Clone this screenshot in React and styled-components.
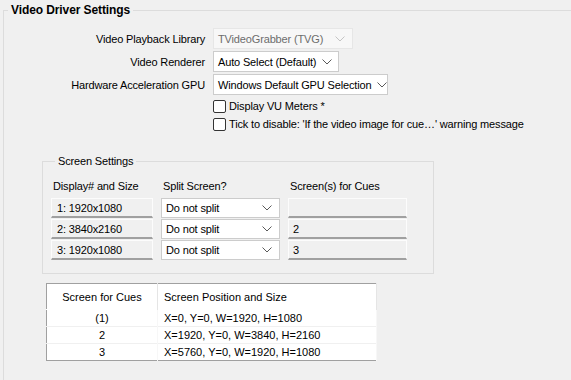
import React from "react";
import styled, { createGlobalStyle } from "styled-components";

const GlobalStyle = createGlobalStyle`
  html, body {
    margin: 0;
    padding: 0;
    background: #f0f0f0;
  }
  body {
    font-family: "Liberation Sans", Arial, sans-serif;
    font-size: 11px;
    letter-spacing: -0.15px;
    color: #000;
    overflow: hidden;
  }
`;

// 화면 데이터
const displays = [
  { name: "1: 1920x1080", split: "Do not split", cue: "" },
  { name: "2: 3840x2160", split: "Do not split", cue: "2" },
  { name: "3: 1920x1080", split: "Do not split", cue: "3" },
];

const cueScreens = [
  { screen: "(1)", pos: "X=0, Y=0, W=1920, H=1080" },
  { screen: "2", pos: "X=1920, Y=0, W=3840, H=2160" },
  { screen: "3", pos: "X=5760, Y=0, W=1920, H=1080" },
];

const Page = styled.div`
  height: 380px;
  width: 571px;
  overflow: hidden;
  padding-left: 3px;
  box-sizing: border-box;
`;

const Group = styled.fieldset`
  margin: 3px 0 0 0;
  padding: 11px 0 0 0;
  width: 640px;
  height: 420px;
  border: 1px solid #dcdcdc;
  box-sizing: border-box;
`;

const Legend = styled.legend`
  margin-left: 4px;
  padding: 0 3px;
  font-weight: bold;
  font-size: 12px;
  letter-spacing: -0.1px;
  line-height: 14px;
`;

const FormGrid = styled.div`
  display: grid;
  grid-template-columns: 201px auto;
  grid-template-rows: 21px 21px 21px auto;
  column-gap: 8px;
  row-gap: 2px;
  align-items: center;
  justify-items: start;
`;

const Label = styled.div`
  justify-self: end;
  white-space: nowrap;
  line-height: 14px;
`;

const Combo = styled.div`
  display: flex;
  align-items: center;
  justify-content: space-between;
  gap: 6px;
  box-sizing: border-box;
  height: ${p => p.$h || 21}px;
  width: ${p => (p.$w ? `${p.$w}px` : "auto")};
  padding: 0 7px 0 4px;
  background: ${p => (p.$disabled ? "#f7f7f7" : "#fff")};
  border: 1px solid ${p => (p.$disabled ? "#e6e6e6" : "#cccccc")};
  color: ${p => (p.$disabled ? "#6d6d6d" : "#000")};
  white-space: nowrap;
  overflow: hidden;
  line-height: 14px;

  svg {
    flex-shrink: 0;
  }
`;

const Chevron = ({ color }) => (
  <svg width="10" height="6" viewBox="0 0 10 6">
    <path d="M0.5 0.5 L5 5 L9.5 0.5" fill="none" stroke={color} strokeWidth="1" />
  </svg>
);

const CheckList = styled.div`
  grid-column: 2;
  display: flex;
  flex-direction: column;
`;

const CheckRow = styled.label`
  display: flex;
  align-items: center;
  gap: 3px;
  height: 18px;
  white-space: nowrap;
`;

const CheckBox = styled.span`
  width: 13px;
  height: 13px;
  box-sizing: border-box;
  border: 1px solid #333;
  border-radius: 2px;
  background: #fff;
`;

const SubGroup = styled.fieldset`
  margin: 21px 0 0 38px;
  padding: 11px 0 13px 8px;
  width: 392px;
  border: 1px solid #dcdcdc;
  box-sizing: border-box;
`;

const SubLegend = styled.legend`
  margin-left: 4px;
  padding: 0 3px;
  line-height: 14px;
`;

const ScreenGrid = styled.div`
  display: grid;
  grid-template-columns: 102px 119px 119px;
  grid-template-rows: 18px;
  grid-auto-rows: 20px;
  column-gap: 8px;
  row-gap: 1px;
`;

const Header = styled.div`
  padding-left: 2px;
  line-height: 14px;
`;

const Cell = styled.div`
  display: flex;
  align-items: center;
  box-sizing: border-box;
  padding-left: ${p => p.$pad || 5}px;
  background: #f0f0f0;
  border-top: 1px solid #fcfcfc;
  border-left: 1px solid #fcfcfc;
  border-right: 1px solid #fcfcfc;
  border-bottom: 2px solid #a0a0a0;
`;

const Table = styled.table`
  margin: 9px 0 0 42px;
  width: 331px;
  border: 1px solid #a0a0a0;
  border-collapse: collapse;
  background: #fff;
  font-size: 11px;
  letter-spacing: 0;
`;

const Th = styled.th`
  height: 25px;
  padding: 0 0 0 ${p => (p.$center ? 0 : 6)}px;
  font-weight: normal;
  text-align: ${p => (p.$center ? "center" : "left")};
  border-right: 1px solid #e5e5e5;
  width: ${p => (p.$w ? `${p.$w}px` : "auto")};
`;

const Td = styled.td`
  height: 16px;
  padding: 0 0 0 ${p => (p.$center ? 0 : 6)}px;
  line-height: 14px;
  text-align: ${p => (p.$center ? "center" : "left")};
  border-top: 1px solid ${p => (p.$first ? "#fff" : "#f0f0f0")};
  border-right: 1px solid #f7f7f7;
`;

const App = () => {
  return (
    <Page>
      <GlobalStyle />
      <Group>
        <Legend>Video Driver Settings</Legend>
        <FormGrid>
          <Label>Video Playback Library</Label>
          <Combo $disabled $w={140}>
            TVideoGrabber (TVG)
            <Chevron color="#c4c4c4" />
          </Combo>
          <Label>Video Renderer</Label>
          <Combo $w={126}>
            Auto Select (Default)
            <Chevron color="#5a5a5a" />
          </Combo>
          <Label>Hardware Acceleration GPU</Label>
          <Combo $w={175}>
            Windows Default GPU Selection
            <Chevron color="#5a5a5a" />
          </Combo>
          <CheckList>
            <CheckRow>
              <CheckBox />
              Display VU Meters *
            </CheckRow>
            <CheckRow>
              <CheckBox />
              Tick to disable: 'If the video image for cue…' warning message
            </CheckRow>
          </CheckList>
        </FormGrid>

        <SubGroup>
          <SubLegend>Screen Settings</SubLegend>
          <ScreenGrid>
            <Header>Display# and Size</Header>
            <Header>Split Screen?</Header>
            <Header>Screen(s) for Cues</Header>
            {displays.map(d => (
              <React.Fragment key={d.name}>
                <Cell>{d.name}</Cell>
                <Combo $h={20}>
                  {d.split}
                  <Chevron color="#5a5a5a" />
                </Combo>
                <Cell $pad={4}>{d.cue}</Cell>
              </React.Fragment>
            ))}
          </ScreenGrid>
        </SubGroup>

        <Table>
          <thead>
            <tr>
              <Th $center $w={110}>Screen for Cues</Th>
              <Th>Screen Position and Size</Th>
            </tr>
          </thead>
          <tbody>
            {cueScreens.map((c, i) => (
              <tr key={c.screen}>
                <Td $center $first={i === 0}>{c.screen}</Td>
                <Td $first={i === 0}>{c.pos}</Td>
              </tr>
            ))}
          </tbody>
        </Table>
      </Group>
    </Page>
  );
};

export default App;
